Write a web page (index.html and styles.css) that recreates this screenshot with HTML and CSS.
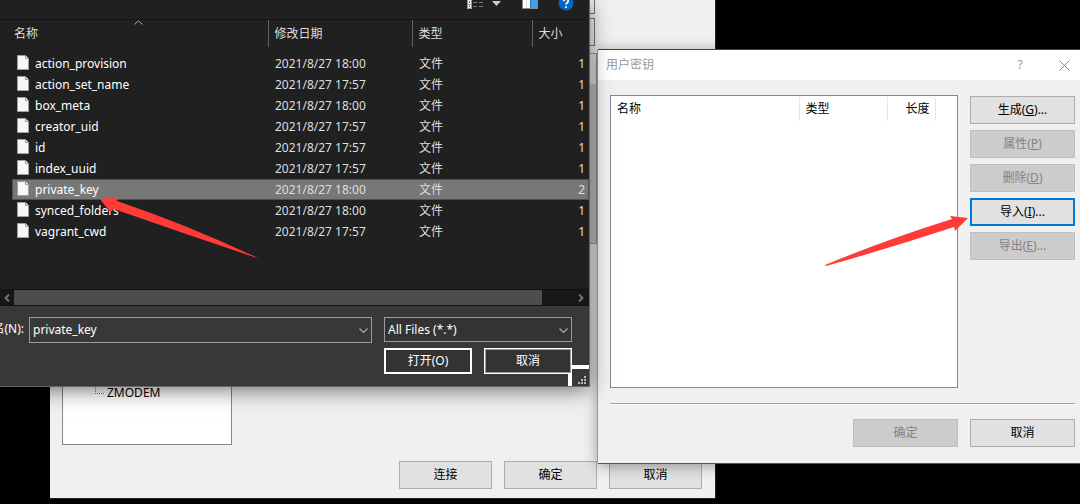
FILE: index.html
```html
<!DOCTYPE html>
<html lang="zh-CN">
<head>
<meta charset="utf-8">
<title>用户密钥</title>
<link rel="stylesheet" href="styles.css">
</head>
<body>
<main class="desktop">

  <section class="window settings">
    <div class="settings-body">
      <ul class="tree">
        <li class="tree-item"><span class="tree-branch"></span>ZMODEM</li>
      </ul>
      <div class="settings-panel">
        <div class="field field-first"></div>
        <div class="field"></div>
        <div class="group"><div class="group-head"></div></div>
      </div>
    </div>
    <div class="settings-actions">
      <button class="btn" type="button">连接</button>
      <button class="btn" type="button">确定</button>
      <button class="btn" type="button">取消</button>
    </div>
  </section>

  <section class="window keys">
    <header class="titlebar">
      <h1 class="title">用户密钥</h1>
      <button class="title-btn" type="button" aria-label="帮助">?</button>
      <button class="title-btn" type="button" aria-label="关闭">
        <svg width="11" height="11" viewBox="0 0 11 11"><path d="M.5.5l10 10M10.500.5l-10 10" fill="none" stroke="#888"/></svg>
      </button>
    </header>
    <div class="keys-body">
      <div class="key-list">
        <table class="key-table">
          <thead><tr><th class="key-name">名称</th><th class="key-type">类型</th><th class="key-length">长度</th><th></th></tr></thead>
        </table>
      </div>
      <div class="key-actions">
        <button class="btn" type="button">生成(<u>G</u>)...</button>
        <button class="btn" type="button" disabled>属性(<u>P</u>)</button>
        <button class="btn" type="button" disabled>删除(<u>D</u>)</button>
        <button class="btn btn-focus" type="button">导入(<u>I</u>)...</button>
        <button class="btn" type="button" disabled>导出(<u>E</u>)...</button>
      </div>
    </div>
    <hr class="rule">
    <div class="keys-footer">
      <button class="btn" type="button" disabled>确定</button>
      <button class="btn" type="button">取消</button>
    </div>
  </section>

  <section class="window picker">
    <svg class="symbols" width="0" height="0">
      <symbol id="file" viewBox="0 0 12 15">
        <path d="M.5.5H8.500L11.500 3.500V14.500H.5Z" fill="#f7f7f7" stroke="#a0a0a0"/>
        <path d="M8.500.5V3.500H11.500" fill="#eee" stroke="#999"/>
      </symbol>
      <symbol id="chevron" viewBox="0 0 9 6"><path d="M.5.5L4.500 4.500L8.500.5" fill="none" stroke="#aaa" stroke-width="1.200"/></symbol>
    </svg>
    <div class="toolbar">
      <button class="tool" type="button" aria-label="视图">
        <svg width="34" height="20" viewBox="0 0 34 20">
          <path d="M0 0H5V9H0Z" fill="#eee"/><path d="M.5-1V8.500H4.500V-1M.5 4.500h4" fill="none" stroke="#999"/>
          <path d="M2 1h1v2H2Z" fill="#46c"/><path d="M2 6h1v1H2Z" fill="#c33"/>
          <path d="M6 2.500h4M12 2.500h4M6 6.500h4M12 6.500h4" stroke="#777"/>
          <path d="M25 1h9l-4.500 5Z" fill="#ccc"/>
        </svg>
      </button>
      <button class="tool" type="button" aria-label="预览窗格">
        <svg width="16" height="20" viewBox="0 0 16 20"><path d="M.5-1V8.500H15.500V-1" fill="#fff" stroke="#888"/><path d="M4.500 0V8" stroke="#ddd"/><path d="M9 0h6v8H9Z" fill="#43a0e8"/><path d="M8.500 0v8" stroke="#27c"/></svg>
      </button>
      <button class="tool help" type="button" aria-label="帮助">
        <svg width="16" height="20" viewBox="0 0 16 20"><circle cx="8" cy="3" r="7.500" fill="#0067c7"/><path d="M5.800 1.200C5.800-1.800 10.200-1.500 10.200 1C10.200 2.700 8 2.700 8 4.600" fill="none" stroke="#fff" stroke-width="1.800"/><circle cx="8" cy="7" r="1.100" fill="#fff"/></svg>
      </button>
    </div>
    <div class="file-list">
      <svg class="sort" width="9" height="5" viewBox="0 0 9 5"><path d="M.5 4.500L4.500.8L8.500 4.500" fill="none" stroke="#aaa"/></svg>
      <table class="files">
        <thead>
          <tr><th class="col-name">名称</th><th class="col-date">修改日期</th><th class="col-type">类型</th><th class="col-size">大小</th></tr>
        </thead>
        <tbody>
          <tr><td><svg class="file-icon"><use href="#file"/></svg>action_provision</td><td>2021/8/27 18:00</td><td>文件</td><td>1</td></tr>
          <tr><td><svg class="file-icon"><use href="#file"/></svg>action_set_name</td><td>2021/8/27 17:57</td><td>文件</td><td>1</td></tr>
          <tr><td><svg class="file-icon"><use href="#file"/></svg>box_meta</td><td>2021/8/27 18:00</td><td>文件</td><td>1</td></tr>
          <tr><td><svg class="file-icon"><use href="#file"/></svg>creator_uid</td><td>2021/8/27 17:57</td><td>文件</td><td>1</td></tr>
          <tr><td><svg class="file-icon"><use href="#file"/></svg>id</td><td>2021/8/27 17:57</td><td>文件</td><td>1</td></tr>
          <tr><td><svg class="file-icon"><use href="#file"/></svg>index_uuid</td><td>2021/8/27 17:57</td><td>文件</td><td>1</td></tr>
          <tr class="selected"><td><svg class="file-icon"><use href="#file"/></svg>private_key</td><td>2021/8/27 18:00</td><td>文件</td><td>2</td></tr>
          <tr><td><svg class="file-icon"><use href="#file"/></svg>synced_folders</td><td>2021/8/27 18:00</td><td>文件</td><td>1</td></tr>
          <tr><td><svg class="file-icon"><use href="#file"/></svg>vagrant_cwd</td><td>2021/8/27 17:57</td><td>文件</td><td>1</td></tr>
        </tbody>
      </table>
    </div>
    <div class="scrollbar">
      <button class="scroll-btn" type="button" aria-label="向左滚动"><svg width="6" height="8" viewBox="0 0 6 8"><path d="M5 .5L1.500 4L5 7.500" fill="none" stroke="#777" stroke-width="1.800"/></svg></button>
      <div class="scroll-thumb"></div>
      <button class="scroll-btn scroll-end" type="button" aria-label="向右滚动"><svg width="6" height="8" viewBox="0 0 6 8"><path d="M1 .5L4.500 4L1 7.500" fill="none" stroke="#777" stroke-width="1.800"/></svg></button>
    </div>
    <div class="picker-footer">
      <div class="picker-row">
        <label class="name-label" for="filename">文件名(N):</label>
        <div class="combo combo-name">
          <input id="filename" class="control" type="text" value="private_key">
          <svg class="combo-arrow" width="9" height="6"><use href="#chevron"/></svg>
        </div>
        <div class="combo combo-filter">
          <select class="control" aria-label="文件类型"><option>All Files (*.*)</option></select>
          <svg class="combo-arrow" width="9" height="6"><use href="#chevron"/></svg>
        </div>
      </div>
      <div class="picker-actions">
        <button class="dark-btn dark-default" type="button">打开(O)</button>
        <button class="dark-btn" type="button">取消</button>
      </div>
      <div class="grip"><svg width="8" height="8" viewBox="0 0 8 8"><path d="M6 0h2v2H6ZM3 3h2v2H3ZM6 3h2v2H6ZM0 6h2v2H0ZM3 6h2v2H3ZM6 6h2v2H6Z" fill="#bbb"/></svg></div>
    </div>
  </section>

  <svg class="arrow arrow-file" width="162" height="64" viewBox="0 0 162 64"><path d="M0 3L18 1L17 5Q88 29 160 63Q88 39 14 13L10 16Z" fill="#ff3b38"/></svg>
  <svg class="arrow arrow-import" width="144" height="52" viewBox="0 0 144 52"><path d="M143 3L125 1L127 4Q60 25 0 50L1 51Q65 33 129 12L130 16Z" fill="#ff3b38"/></svg>
</main>
</body>
</html>
```

FILE: styles.css
```css
* { box-sizing: border-box; }

body {
  margin: 0;
  background: #000;
  color: #000;
  font: 12px/16px "Noto Sans", "Noto Sans CJK SC", sans-serif;
}

button, input, select { font: inherit; color: inherit; margin: 0; }
button { padding: 0; border: 0; background: none; }

.desktop { position: relative; height: 100vh; overflow: hidden; }
.window { position: absolute; display: flex; flex-direction: column; }

.btn {
  height: 28px;
  border: 1px solid #adadad;
  background: #e1e1e1;
}
.btn:disabled { border-color: #bfbfbf; background: #ccc; color: #838383; }
.btn-focus { border: 2px solid #0078d7; }

/* Session settings window */
.settings {
  top: 0;
  bottom: 5px;
  left: 50px;
  right: 364px;
  padding: 0 13px 9px 12px;
  background: #f0f0f0;
  border-right: 1px solid #222;
  border-bottom: 1px solid #222;
}
.settings-body { flex: 1; display: flex; justify-content: space-between; }
.tree {
  display: flex;
  flex-direction: column;
  justify-content: flex-end;
  width: 170px;
  margin: 0 0 16px;
  padding: 0 0 43px 32px;
  border: 1px solid #828790;
  background: #fff;
  list-style: none;
}
.tree-item { display: flex; gap: 3px; }
.tree-branch {
  width: 9px;
  height: 9px;
  border-left: 1px dotted #777;
  border-bottom: 1px dotted #777;
}
.settings-panel { width: 300px; margin-right: 107px; }
.field { height: 28px; margin-bottom: 7px; border: 1px solid #777; }
.field-first { height: 14px; margin-bottom: 4px; border-top: 0; }
.group { height: 191px; width: 302px; border: 1px solid #999; background: #cdcdcd; }
.group-head { height: 30px; background: #f0f0f0; }
.settings-actions { display: flex; justify-content: flex-end; gap: 12px; }
.settings-actions .btn { width: 93px; }

/* User key window */
.keys {
  top: 50px;
  left: 598px;
  right: 0;
  background: #f0f0f0;
  box-shadow: -1px 0 0 #999, 0 -1px 0 #444, 0 1px 0 #555, 0 2px 14px rgba(0, 0, 0, .4);
}
.titlebar {
  display: flex;
  align-items: center;
  height: 30px;
  padding: 0 10px 0 8px;
  background: #fff;
  color: #999;
}
.title { flex: 1; margin: 0; font-size: 12px; font-weight: 400; }
.title-btn { display: flex; justify-content: center; width: 12px; }
.title-btn + .title-btn { margin-left: 32px; }
.keys-body { display: flex; gap: 12px; padding: 15px 5px 0 12px; }
.key-list { flex: 1; height: 293px; border: 1px solid #828790; background: #fff; }
.key-table { width: 100%; margin-top: 1px; border-collapse: collapse; table-layout: fixed; }
.key-table th {
  height: 24px;
  padding: 0 6px;
  border-right: 1px solid #e5e5e5;
  font-weight: 400;
  text-align: left;
}
.key-table th:last-child { border-right: 0; }
.key-name { width: 188px; }
.key-type { width: 88px; }
.key-table .key-length { width: 48px; padding: 0 5px; text-align: right; }
.key-actions { display: flex; flex-direction: column; gap: 6px; width: 105px; padding-top: 1px; }
.rule {
  width: auto;
  height: 2px;
  margin: 15px 5px 0 12px;
  border: 0;
  border-top: 1px solid #a0a0a0;
  border-bottom: 1px solid #fff;
}
.keys-footer { display: flex; justify-content: flex-end; gap: 12px; padding: 14px 5px 16px; }
.keys-footer .btn { width: 105px; }

/* File picker */
.picker {
  top: 0;
  left: 0;
  right: 491px;
  background: #202020;
  color: #fff;
  box-shadow: 0 0 0 1px #666, 0 4px 20px rgba(0, 0, 0, .55);
}
.symbols { position: absolute; }
.toolbar {
  display: flex;
  justify-content: flex-end;
  height: 20px;
  padding-right: 15px;
  border-bottom: 1px solid #151515;
}
.tool { display: flex; height: 19px; overflow: hidden; }
.tool + .tool { margin-left: 21px; }
.tool + .help { margin-left: 20px; }
.file-list { position: relative; height: 269px; padding-left: 12px; }
.sort { position: absolute; left: 134px; top: 0; }
.files { width: 100%; border-collapse: collapse; table-layout: fixed; }
.files th {
  height: 27px;
  padding: 0 6px;
  border-right: 1px solid #636363;
  color: #dedede;
  font-weight: 400;
  text-align: left;
}
.files th:first-child { padding-left: 2px; }
.files th:last-child { border-right: 0; }
.col-name { width: 256px; }
.col-date { width: 144px; }
.col-type { width: 120px; }
.files tbody::before { content: ""; display: block; height: 6px; }
.files td { height: 21px; padding: 0 7px; color: #dedede; line-height: 18px; white-space: nowrap; }
.files td:first-child { padding-left: 5px; color: #fff; }
.files td:last-child { padding-right: 4px; text-align: right; }
.file-icon { width: 12px; height: 15px; margin-right: 6px; vertical-align: -2px; }
.selected { background: #777; box-shadow: inset 0 0 0 1px #505050; }

.scrollbar { display: flex; height: 17px; border-top: 1px solid #101010; border-bottom: 1px solid #101010; background: #171717; }
.scroll-btn { display: flex; align-items: center; justify-content: center; width: 14px; }
.scroll-thumb { flex: 1; margin-right: 30px; background: #4d4d4d; }
.scroll-end { width: 17px; }

.picker-footer { position: relative; padding: 11px 17px 12px 0; background: #383838; }
.picker-row { display: flex; align-items: flex-start; }
.name-label {
  display: flex;
  justify-content: flex-end;
  width: 24px;
  margin-right: 5px;
  padding-top: 4px;
  overflow: hidden;
  white-space: nowrap;
}
.combo { position: relative; display: flex; }
.combo-name { flex: 1; height: 26px; margin-right: 12px; }
.combo-filter { width: 188px; height: 25px; }
.control {
  width: 100%;
  padding: 0 24px 0 3px;
  border: 1px solid #9b9b9b;
  border-radius: 0;
  background: #383838;
  appearance: none;
}
select.control { background: #333; }
.combo-arrow { position: absolute; right: 4px; top: 11px; }
.picker-actions { position: relative; z-index: 1; display: flex; justify-content: flex-end; gap: 12px; margin-top: 5px; }
.dark-btn {
  width: 88px;
  height: 26px;
  border: 1px solid #fff;
  background: #333;
  box-shadow: inset 0 0 0 1px #9b9b9b;
}
.dark-default { border-width: 2px; box-shadow: none; }
.grip {
  position: absolute;
  right: 0;
  bottom: 0;
  display: flex;
  align-items: flex-end;
  justify-content: flex-end;
  width: 21px;
  height: 21px;
  padding: 0 3px 2px 0;
  border-top: 4px solid #fff;
  border-left: 4px solid #fff;
}

.arrow { position: absolute; pointer-events: none; }
.arrow-file { left: 100px; top: 196px; }
.arrow-import { left: 825px; top: 215px; }
```
